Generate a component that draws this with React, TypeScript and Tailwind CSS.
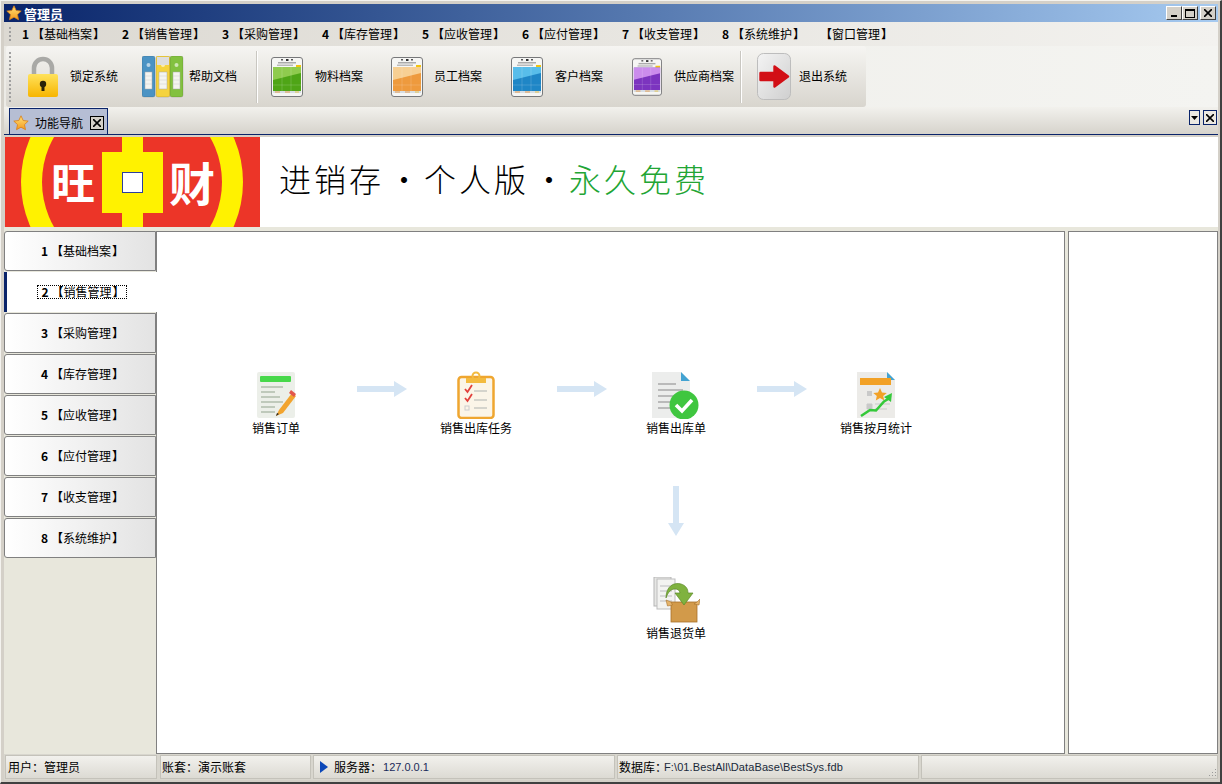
import type { ReactNode } from "react";

const menus = ["1【基础档案】", "2【销售管理】", "3【采购管理】", "4【库存管理】", "5【应收管理】", "6【应付管理】", "7【收支管理】", "8【系统维护】"];

function Star({ size = 16 }: { size?: number }) {
  return (
    <svg width={size} height={size} viewBox="0 0 16 16">
      <defs>
        <linearGradient id="st" x1="0" y1="0" x2="0" y2="1">
          <stop offset="0" stopColor="#ffe27a" />
          <stop offset="1" stopColor="#f59a1c" />
        </linearGradient>
      </defs>
      <path d="M8 .8l2.200 4.700 5 .6-3.700 3.500 1 5.100L8 12.200l-4.500 2.500 1-5.100L.8 6.100l5-.6z" fill="url(#st)" stroke="#d97f16" strokeWidth=".8" />
    </svg>
  );
}

function Lock() {
  return (
    <svg width="34" height="42" viewBox="0 0 34 42">
      <defs>
        <linearGradient id="lk" x1="0" y1="0" x2="0" y2="1">
          <stop offset="0" stopColor="#ffe25c" />
          <stop offset="1" stopColor="#f7b500" />
        </linearGradient>
      </defs>
      <path d="M8 20V12a9 9 0 0 1 18 0v8" fill="none" stroke="#a9a9a6" strokeWidth="4.500" />
      <rect x="2" y="18" width="30" height="23" rx="2" fill="url(#lk)" />
      <circle cx="17" cy="28" r="3.200" fill="#2b2308" />
      <rect x="15.500" y="29" width="3" height="6" fill="#2b2308" />
    </svg>
  );
}

function Binders() {
  const binder = (x: number, w: number, c: string) => (
    <g>
      <rect x={x} y="0" width={w} height="41" rx="2" fill={c} stroke="#00000022" />
      <circle cx={x + w / 2} cy="9" r="2" fill="#ffffff99" />
      <rect x={x + 3} y="16" width={w - 6} height="17" fill="#f4f4f0" stroke="#a9a9a9" strokeWidth=".5" />
      <path d={`M${x + 3} 20h${w - 6}M${x + 3} 24h${w - 6}M${x + 3} 28h${w - 6}`} stroke="#cfcfcf" strokeWidth=".5" />
    </g>
  );
  return (
    <svg width="42" height="42" viewBox="0 0 42 42">
      {binder(0, 13, "#4b93c4")}
      {binder(14, 14, "#f5d33e")}
      <rect x="15" y="1" width="12" height="8" fill="#dedede" />
      {binder(28, 13, "#82c13f")}
    </svg>
  );
}

function Sheet({ top, bottom, w = 32 }: { top: string; bottom: string; w?: number }) {
  return (
    <svg width={w} height="40" viewBox="0 0 32 40">
      <rect x=".5" y=".5" width="31" height="39" rx="2.500" fill="#f6f6f4" stroke="#77787a" />
      <rect x="10" y="2" width="2" height="1.500" fill="#555" />
      <rect x="15" y="2" width="2.500" height="2" fill="#333" />
      <rect x="20" y="2" width="2" height="1.500" fill="#555" />
      <rect x="7" y="5" width="18" height="1.500" fill="#aaa" />
      <rect x="6" y="7.500" width="16" height="1.500" fill="#bbb" />
      <rect x="25" y="8" width="5" height="2" fill="#f1c40f" />
      <rect x="2" y="10" width="28" height="24" fill={bottom} />
      <path d="M2 10h28v6L2 23z" fill={top} />
      <path d="M11 10v24M20 10v24M2 28h28" stroke="#ffffff44" strokeWidth=".6" />
      <rect x="2" y="34" width="28" height="2" fill="#d6dee5" />
      <rect x="4" y="34.500" width="5" height="1" fill="#e59a4c" />
      <rect x="14" y="34.500" width="5" height="1" fill="#e59a4c" />
      <rect x="24" y="34.500" width="4" height="1" fill="#e5c14c" />
    </svg>
  );
}

function ExitIcon() {
  return (
    <svg width="36" height="48" viewBox="0 0 36 48">
      <defs>
        <linearGradient id="ex" x1="0" y1="0" x2="1" y2="1">
          <stop offset="0" stopColor="#f4f4f4" />
          <stop offset="1" stopColor="#cfcfcf" />
        </linearGradient>
      </defs>
      <rect x=".5" y=".5" width="33" height="46" rx="6" fill="url(#ex)" stroke="#bdbdbd" />
      <path d="M3.500 20h14v-6.500L31 23.500 17.500 33.500V27h-14z" fill="#d20f16" stroke="#d20f16" strokeWidth="2.400" strokeLinejoin="round" />
    </svg>
  );
}

function ToolItem({ icon, label, width, iconWidth, className = "" }: { icon: ReactNode; label: string; width: number; iconWidth: number; className?: string }) {
  return (
    <div className={`flex h-full shrink-0 items-center ${className}`} style={{ width }}>
      <div className="flex shrink-0 items-center justify-center" style={{ width: iconWidth }}>
        {icon}
      </div>
      <span className="mb-[2px]">{label}</span>
    </div>
  );
}

function Divider() {
  return <div className="mx-[1px] h-[52px] w-[2px] shrink-0 border-r border-white bg-[#c9c7c1]" />;
}

function Arrow({ vertical }: { vertical?: boolean }) {
  return vertical ? (
    <svg width="16" height="50" viewBox="0 0 16 50">
      <path d="M5 0h6v37h5L8 50 0 37h5z" fill="#d5e5f4" />
    </svg>
  ) : (
    <svg width="50" height="16" viewBox="0 0 50 16">
      <path d="M0 5h37V0l13 8-13 8v-5H0z" fill="#d5e5f4" />
    </svg>
  );
}

function OrderIcon() {
  return (
    <svg width="40" height="48" viewBox="0 0 40 48">
      <rect x="1" y="1" width="38" height="46" rx="2" fill="#ecefe9" />
      <rect x="4" y="5" width="31" height="6" rx="1" fill="#47d84a" />
      <path d="M5 16h22M5 21h14M5 26h19M5 31h22M5 36h14M5 41h14" stroke="#b0bdac" strokeWidth="1.600" />
      <path d="M23 39l-3 6 7-3 13-17-4-3z" fill="#f2a42e" />
      <path d="M35 19l5 4-2 3-5-4z" fill="#e2574c" />
      <path d="M20 45l1-3 2 1z" fill="#222" />
    </svg>
  );
}

function ClipboardIcon() {
  return (
    <svg width="38" height="48" viewBox="0 0 38 48">
      <rect x="1.500" y="6" width="35" height="41" rx="3" fill="#fbf5e8" stroke="#efa630" strokeWidth="2.500" />
      <path d="M9 7h20v5H9z" fill="#f3bb3f" />
      <circle cx="19" cy="5" r="3.500" fill="none" stroke="#f3bb3f" strokeWidth="2" />
      <path d="M8 18l2.500 3L15 14M8 27l2.500 3L15 23" fill="none" stroke="#e2403c" strokeWidth="1.800" />
      <rect x="8" y="35" width="4" height="4" fill="none" stroke="#ccc" />
      <path d="M17 20h13M17 29h13M17 37h13" stroke="#c9c9c2" strokeWidth="1.500" />
    </svg>
  );
}

function CheckDocIcon() {
  return (
    <svg width="50" height="48" viewBox="0 0 50 48">
      <path d="M1 1h29l9 9v37H1z" fill="#ecedec" />
      <path d="M30 1l9 9h-9z" fill="#43a3d2" />
      <path d="M7 13h18M7 19h25M7 25h20M7 31h16M7 37h14" stroke="#a9a9a9" strokeWidth="1.700" />
      <circle cx="33" cy="34" r="14.500" fill="#3fc63f" />
      <path d="M25 34l6 6 10-11" fill="none" stroke="#fff" strokeWidth="3.600" />
    </svg>
  );
}

function StatDocIcon() {
  return (
    <svg width="40" height="48" viewBox="0 0 40 48">
      <path d="M1 1h30l8 8v38H1z" fill="#ecebe8" />
      <path d="M31 1l8 8h-8z" fill="#43a3d2" />
      <rect x="4" y="7" width="31" height="7" fill="#f2a126" />
      <rect x="11" y="20" width="5" height="5" fill="#c9c9c9" />
      <path d="M24 17l2 4.500 4.800.4-3.600 3 1.100 4.600-4.300-2.500-4.200 2.500 1-4.600-3.500-3 4.700-.4z" fill="#f2a126" />
      <path d="M11 33h5v5h-5zM19 33h15M19 38h12" fill="#c9c9c9" stroke="#c9c9c9" strokeWidth="1" />
      <path d="M5 45l9-6 6 .5 8-9 5-3" fill="none" stroke="#35c93a" strokeWidth="2.600" />
      <path d="M36 22l-1 9-7-5z" fill="#35c93a" />
    </svg>
  );
}

function ReturnIcon() {
  return (
    <svg width="48" height="46" viewBox="0 0 48 46">
      <rect x="2" y="0" width="17" height="29" fill="#e6e6e4" stroke="#b5b5b5" />
      <rect x="5" y="2" width="18" height="30" fill="#f3f3f1" stroke="#bdbdbd" />
      <path d="M8 9h12M8 14h12M8 19h12M8 24h12" stroke="#cfcfcf" strokeWidth="1.300" />
      <rect x="19" y="25" width="26" height="20" fill="#d29a4a" stroke="#a8722c" strokeWidth=".8" />
      <path d="M19 25l-5-2 1.500 6 5-1zM45 25l3-3-1 6-5-1z" fill="#e5b46c" stroke="#a8722c" strokeWidth=".6" />
      <path d="M14 21c0-12 8-16 15-14 5 1.500 7 5 7 9h5l-9 12-9-12h5c-.5-3-2.500-4-5-4-4 0-7 3-9 9z" fill="#7fb23f" stroke="#5c8a28" strokeWidth=".7" />
    </svg>
  );
}

function FlowNode({ x, y, icon, label }: { x: number; y: number; icon: ReactNode; label: string }) {
  return (
    <div className="absolute flex w-[120px] -translate-x-1/2 flex-col items-center" style={{ left: x, top: y }}>
      <div className="flex h-[48px] items-center justify-center">{icon}</div>
      <span className="mt-[1px] leading-[16px]">{label}</span>
    </div>
  );
}

function WinBtn({ children }: { children: ReactNode }) {
  return (
    <div className="flex h-[14px] w-[16px] items-center justify-center border border-t-white border-r-[#404040] border-b-[#404040] border-l-white bg-[#d4d0c8] text-black">
      {children}
    </div>
  );
}

function CloseX({ size = 8 }: { size?: number }) {
  return (
    <svg width={size} height={size} viewBox="0 0 8 8">
      <path d="M0 0l8 8M8 0L0 8" stroke="#000" strokeWidth="1.600" />
    </svg>
  );
}

// digit and brackets are bold in the original, the name is not
function ModuleLabel({ text }: { text: string }) {
  const digit = text[0];
  const name = text.slice(2, -1);
  return (
    <span className="flex items-center">
      <span className="w-[10px] font-bold">{digit}</span>
      <span className="font-bold">【</span>
      <span>{name}</span>
      <span className="ml-[1px] font-bold">】</span>
    </span>
  );
}

function SideButton({ label, active }: { label: string; active?: boolean }) {
  if (active) {
    return (
      <div className="relative z-10 -mr-[1px] mb-[1px] flex h-[40px] items-center justify-center border-l-[3px] border-[#0a246a] bg-white">
        <span className="border border-dotted border-black pr-[1px] pl-[3px] leading-[12px]">
          <ModuleLabel text={label} />
        </span>
      </div>
    );
  }
  return (
    <div className="mb-[1px] flex h-[40px] items-center justify-center rounded-l-[3px] border border-[#808080] bg-gradient-to-r from-white to-[#e3e3e3] pl-[5px]">
      <ModuleLabel text={label} />
    </div>
  );
}

function StatusCell({ className, children }: { className: string; children: ReactNode }) {
  return (
    <div className={`flex h-[24px] items-center border border-[#c4c2ba] bg-gradient-to-b from-[#f2f1ed] to-[#dcdad3] ${className}`}>
      {children}
    </div>
  );
}

export default function App() {
  return (
    <div
      className="flex h-[784px] w-[1222px] flex-col overflow-hidden border-t border-r-2 border-b-2 border-l border-t-[#f4f3ef] border-r-[#404040] border-b-[#404040] border-l-[#f4f3ef] bg-[#d4d0c8] text-[12px] leading-none text-black"
      style={{ fontFamily: '"Noto Sans CJK SC", "Liberation Sans", sans-serif' }}
    >
      <div className="flex min-h-0 flex-1 flex-col pt-[3px] pr-[2px] pb-[2px] pl-[3px]">
        {/* title bar */}
        <div className="flex h-[18px] shrink-0 items-center justify-between bg-gradient-to-r from-[#0a246a] to-[#a6caf0] pr-[2px] pl-[2px]">
          <div className="flex items-center gap-[2px] text-[13px] font-bold text-white">
            <Star />
            <span>管理员</span>
          </div>
          <div className="flex">
            <WinBtn>
              <div className="mt-[6px] h-[2px] w-[6px] bg-black" />
            </WinBtn>
            <WinBtn>
              <div className="h-[9px] w-[10px] border border-t-2 border-black" />
            </WinBtn>
            <div className="ml-[2px]">
              <WinBtn>
                <CloseX />
              </WinBtn>
            </div>
          </div>
        </div>

        {/* menu */}
        <div className="flex h-[24px] shrink-0 items-center bg-gradient-to-r from-[#dcd9d2] to-[#f3f2ef] pl-[5px]">
          <div className="mr-[10px] h-[14px] w-[3px] border-l-2 border-dotted border-[#a0a0a0]" />
          {menus.map((m) => (
            <div key={m} className="flex w-[100px] shrink-0 items-center">
              <ModuleLabel text={m} />
            </div>
          ))}
          <div className="ml-[-2px] flex items-center">
            <span className="font-bold">【</span>
            <span>窗口管理</span>
            <span className="ml-[1px] font-bold">】</span>
          </div>
        </div>

        {/* toolbar */}
        <div className="flex h-[61px] shrink-0 bg-gradient-to-r from-[#ecebe6] to-[#f4f4f1]">
          <div className="ml-[2px] flex h-full w-[860px] items-center rounded-[3px] bg-gradient-to-b from-[#f6f5f2] to-[#d8d5ce] pl-[3px]">
            <div className="mr-[5px] h-[50px] w-[2px] shrink-0 border-l-2 border-dotted border-[#a0a0a0]" />
            <ToolItem icon={<Lock />} label="锁定系统" width={120} iconWidth={54} />
            <ToolItem icon={<Binders />} label="帮助文档" width={119} iconWidth={53} />
            <Divider />
            <ToolItem icon={<Sheet top="#8fcb4e" bottom="#4fa516" />} label="物料档案" width={120} iconWidth={56} />
            <ToolItem icon={<Sheet top="#f7cf93" bottom="#ee9a3d" />} label="员工档案" width={120} iconWidth={55} />
            <ToolItem icon={<Sheet top="#58bdea" bottom="#1f86c6" />} label="客户档案" width={120} iconWidth={56} />
            <ToolItem icon={<Sheet top="#cb8cec" bottom="#7c34bf" w={30} />} label="供应商档案" width={120} iconWidth={55} />
            <Divider />
            <ToolItem icon={<ExitIcon />} label="退出系统" width={100} iconWidth={49} className="ml-[7px]" />
          </div>
        </div>

        {/* tab strip */}
        <div className="flex h-[28px] shrink-0 items-end justify-between border-b border-[#0a246a] bg-gradient-to-b from-[#f2f1ed] to-[#d6d3cc] pl-[5px]">
          <div className="flex h-[26px] w-[99px] items-center gap-[6px] border border-b-0 border-[#0a246a] bg-[#b6bed4] pt-[2px] pl-[3px]">
            <Star />
            <span>功能导航</span>
            <div className="ml-[1px] flex h-[14px] w-[14px] items-center justify-center border border-black bg-[#d4d0c8]">
              <CloseX />
            </div>
          </div>
          <div className="mb-[9px] flex gap-[3px] pr-[1px]">
            <div className="flex h-[15px] w-[11px] items-center justify-center border border-[#0a246a] bg-[#ece9e2]">
              <svg width="7" height="4" viewBox="0 0 7 4">
                <path d="M0 0h7L3.500 4z" fill="#000" />
              </svg>
            </div>
            <div className="flex h-[15px] w-[14px] items-center justify-center border border-[#0a246a] bg-[#ece9e2]">
              <CloseX />
            </div>
          </div>
        </div>

        {/* banner */}
        <div className="mt-[2px] ml-[1px] flex h-[90px] shrink-0 items-center bg-white">
          <div className="relative h-[90px] w-[255px] shrink-0 overflow-hidden bg-[#ec3528]">
            <svg width="255" height="90" viewBox="0 0 255 90">
              <circle cx="127" cy="45" r="111" fill="#fff200" />
              <circle cx="127" cy="45" r="90" fill="#ec3528" />
              <path d="M117 0h21v15h20v61h-20v14h-21V76H97V15h20z" fill="#fff200" />
              <rect x="117.500" y="35.500" width="20" height="20" fill="#fff" stroke="#2c3f9e" />
            </svg>
            <span className="absolute top-[19px] left-[46px] text-[44px] leading-[50px] font-bold text-white">旺</span>
            <span className="absolute top-[19px] left-[164px] text-[46px] leading-[50px] font-bold text-white">财</span>
          </div>
          <div className="mb-[8px] ml-[19px] flex items-center text-[32px] font-light tracking-[3px] whitespace-pre">
            <span>进销存</span>
            <span className="w-[40px] text-center tracking-normal">·</span>
            <span>个人版</span>
            <span className="w-[40px] text-center tracking-normal">·</span>
            <span className="text-[#22a534]">永久免费</span>
          </div>
        </div>

        {/* workspace */}
        <div className="flex min-h-0 flex-1 bg-[#e8e7dc] pt-[4px]">
          <div className="flex w-[152px] shrink-0 flex-col">
            <SideButton label="1【基础档案】" />
            <SideButton label="2【销售管理】" active />
            <SideButton label="3【采购管理】" />
            <SideButton label="4【库存管理】" />
            <SideButton label="5【应收管理】" />
            <SideButton label="6【应付管理】" />
            <SideButton label="7【收支管理】" />
            <SideButton label="8【系统维护】" />
          </div>
          <div className="relative min-w-0 flex-1 border border-[#808080] bg-white">
            <FlowNode x={119} y={139} icon={<OrderIcon />} label="销售订单" />
            <div className="absolute top-[149px] left-[200px]"><Arrow /></div>
            <FlowNode x={319} y={139} icon={<ClipboardIcon />} label="销售出库任务" />
            <div className="absolute top-[149px] left-[400px]"><Arrow /></div>
            <FlowNode x={519} y={139} icon={<CheckDocIcon />} label="销售出库单" />
            <div className="absolute top-[149px] left-[600px]"><Arrow /></div>
            <FlowNode x={719} y={139} icon={<StatDocIcon />} label="销售按月统计" />
            <div className="absolute top-[254px] left-[511px]"><Arrow vertical /></div>
            <FlowNode x={519} y={344} icon={<ReturnIcon />} label="销售退货单" />
          </div>
          <div className="ml-[3px] w-[150px] shrink-0 border border-[#808080] bg-white" />
        </div>

        {/* status bar */}
        <div className="flex h-[26px] shrink-0 items-center gap-[2px] bg-[#d8d6ce]">
          <StatusCell className="ml-[1px] w-[152px] pl-[2px]">用户：管理员</StatusCell>
          <StatusCell className="ml-[1px] w-[151px] pl-[1px]">账套：演示账套</StatusCell>
          <StatusCell className="w-[302px] pl-[6px]">
            <svg width="8" height="12" viewBox="0 0 8 12" className="mr-[6px]">
              <path d="M0 0l8 6-8 6z" fill="#0a47b8" />
            </svg>
            服务器：
            <span className="ml-[1px] text-[11px] text-[#1a2a5a]" style={{ fontFamily: '"Liberation Sans", sans-serif' }}>
              127.0.0.1
            </span>
          </StatusCell>
          <StatusCell className="w-[302px] pl-[1px]">
            数据库：
            <span className="ml-[-3px] text-[11px] tracking-[0.1px] text-[#1a2a3a]" style={{ fontFamily: '"Liberation Sans", sans-serif' }}>
              F:\01.BestAll\DataBase\BestSys.fdb
            </span>
          </StatusCell>
          <StatusCell className="flex-1 justify-end">
            <svg width="10" height="10" viewBox="0 0 10 10" className="mt-auto">
              <path d="M8 1h1v1H8zM5 4h1v1H5zM8 4h1v1H8zM2 7h1v1H2zM5 7h1v1H5zM8 7h1v1H8z" fill="#9a9a9a" />
            </svg>
          </StatusCell>
        </div>
      </div>
    </div>
  );
}
